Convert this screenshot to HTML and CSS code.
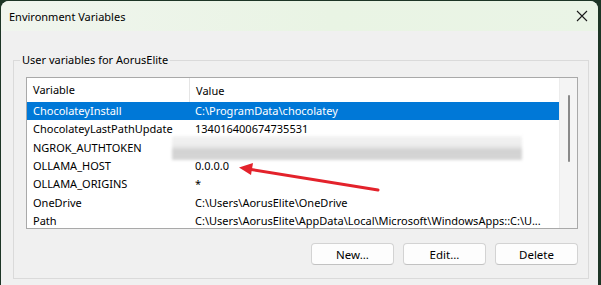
FILE: index.html
```html
<!DOCTYPE html>
<html lang="en">

<head>
    <meta charset="UTF-8">
    <title>Environment Variables</title>
    <link rel="stylesheet" href="styles.css">
</head>

<body>
    <div class="window">
        <div class="titlebar">
            <span class="title">Environment Variables</span>
            <svg class="close" width="12" height="12" viewBox="0 0 12 12">
                <path d="M1 1 L11 11 M11 1 L1 11" stroke="#1b1b1b" stroke-width="1.1" fill="none" />
            </svg>
        </div>

        <div class="content">
            <fieldset class="group">
                <legend>User variables for AorusElite</legend>

                <div class="list">
                    <div class="listMain">
                        <div class="header">
                            <div class="colName">Variable</div>
                            <div class="colValue">Value</div>
                        </div>
                        <div class="rows">
                            <div class="row selected">
                                <div class="colName">ChocolateyInstall</div>
                                <div class="colValue">C:\ProgramData\chocolatey</div>
                            </div>
                            <div class="row">
                                <div class="colName">ChocolateyLastPathUpdate</div>
                                <div class="colValue">134016400674735531</div>
                            </div>
                            <div class="row">
                                <div class="colName">NGROK_AUTHTOKEN</div>
                                <div class="colValue"><span class="blurred"></span></div>
                            </div>
                            <div class="row">
                                <div class="colName">OLLAMA_HOST</div>
                                <div class="colValue">0.0.0.0</div>
                            </div>
                            <div class="row">
                                <div class="colName">OLLAMA_ORIGINS</div>
                                <div class="colValue">*</div>
                            </div>
                            <div class="row">
                                <div class="colName">OneDrive</div>
                                <div class="colValue">C:\Users\AorusElite\OneDrive</div>
                            </div>
                            <div class="row">
                                <div class="colName">Path</div>
                                <div class="colValue">C:\Users\AorusElite\AppData\Local\Microsoft\WindowsApps::C:\U...</div>
                            </div>
                        </div>
                    </div>
                    <div class="scrollbar">
                        <div class="thumb"></div>
                    </div>
                </div>

                <div class="buttonContainer">
                    <button>New...</button>
                    <button>Edit...</button>
                    <button>Delete</button>
                </div>
            </fieldset>
        </div>
    </div>

    <!-- annotation arrow drawn over the screenshot -->
    <svg class="arrow" width="601" height="285" viewBox="0 0 601 285">
        <line x1="378" y1="190" x2="248" y2="169" stroke="#e3222b" stroke-width="3" stroke-linecap="round" />
        <polygon points="239,167.5 253,163 251,175" fill="#e3222b" />
    </svg>
</body>

</html>
```

FILE: styles.css
```css
body {
    margin: 0;
    background-color: #1d3526;
    font-family: "Noto Sans", "Open Sans", sans-serif;
    font-size: 11px;
    color: #000;
    width: 601px;
    height: 285px;
    overflow: hidden;
    position: relative;
}

.window {
    margin: 1px 3px 0 1px;
    height: 284px;
    border-radius: 8px 8px 0 0;
    overflow: hidden;
    background-color: #f0f0f0;
}

.titlebar {
    height: 30px;
    display: flex;
    align-items: center;
    justify-content: space-between;
    padding: 0 10px 0 8px;
    background: linear-gradient(90deg, #f0f5ee 0%, #e9f4e4 55%, #eaf4e6 100%);
}

.title {
    font-size: 11px;
}

.content {
    padding: 22px 9px 0 12px;
}

.group {
    margin: 0;
    min-width: 0;
    padding: 10px 10px 13px 12px;
    border: 1px solid #dadada;
}

.group legend {
    padding: 0 2px;
    margin-left: -6px;
    line-height: 14px;
    font-size: 11px;
}

.list {
    display: flex;
    height: 152px;
    box-sizing: border-box;
    border: 1px solid #a9a9a9;
    background-color: #fff;
}

.listMain {
    flex: 1;
    min-width: 0;
    overflow: hidden;
}

.header {
    display: flex;
    height: 24px;
    align-items: center;
}

.header .colName {
    border-right: 1px solid #e5e5e5;
    height: 24px;
    line-height: 24px;
}

.row {
    display: flex;
    height: 18.35px;
    line-height: 18px;
    white-space: nowrap;
}

.selected {
    background-color: #0078d7;
    color: #fff;
}

.colName {
    flex: none;
    width: 156px;
    padding-left: 6px;
}

.colValue {
    padding-left: 6px;
    position: relative;
}

.blurred {
    position: absolute;
    left: -17px;
    top: -3px;
    width: 350px;
    height: 24px;
    background: linear-gradient(180deg, #f3f3f3 0%, #ececec 40%, #d2d2d2 60%, #d5d5d5 100%);
    filter: blur(1.5px);
}

.scrollbar {
    flex: none;
    width: 17px;
    background-color: #f4f4f4;
    border-left: 1px solid #ececec;
}

.thumb {
    width: 2px;
    height: 67px;
    margin: 17px 0 0 8px;
    border-radius: 1px;
    background-color: #8a8a8a;
}

.buttonContainer {
    display: flex;
    justify-content: flex-end;
    gap: 9px;
    margin-top: 14px;
}

.buttonContainer button {
    width: 83px;
    height: 22px;
    font-family: inherit;
    font-size: 11.5px;
    color: #000;
    background-color: #fdfdfd;
    border: 1px solid #d3d3d3;
    border-bottom-color: #c2c2c2;
    border-radius: 4px;
    padding: 0;
}

.arrow {
    position: absolute;
    left: 0;
    top: 0;
    pointer-events: none;
}
```
